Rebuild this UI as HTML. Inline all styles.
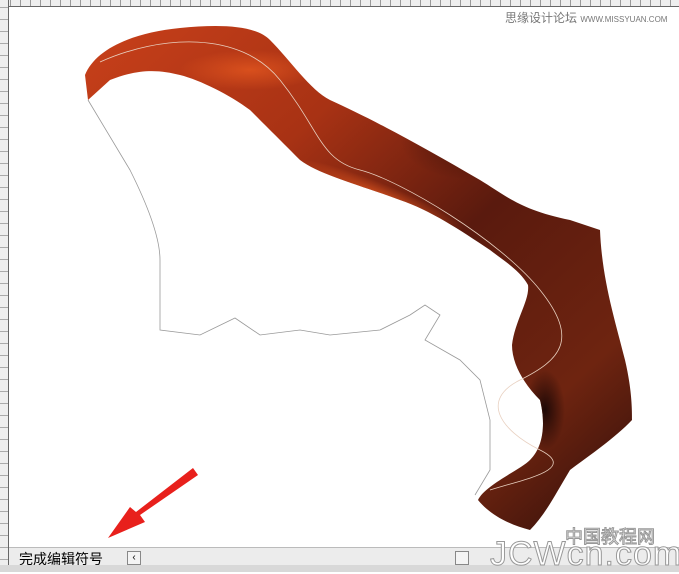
<!DOCTYPE html>
<html><head><meta charset="utf-8"><style>
body{margin:0;width:679px;height:572px;overflow:hidden;background:#fff;font-family:"Liberation Sans","Noto Sans CJK SC",sans-serif;position:relative}
.rt{position:absolute;left:0;top:0;width:679px;height:6px;background:#eee;border-bottom:1px solid #666;background-image:repeating-linear-gradient(90deg,#999 0 1px,transparent 1px 10px)}
.rl{position:absolute;left:0;top:0;width:8px;height:572px;background:#eee;border-right:1px solid #666;background-image:repeating-linear-gradient(0deg,#aaa 0 1px,transparent 1px 12px)}
.bar{position:absolute;left:9px;top:547px;width:670px;height:18px;background:#ececec;border-top:1px solid #bbb}
.bot{position:absolute;left:0;top:565px;width:679px;height:7px;background:#d8d8d8}
</style></head><body>
<svg width="679" height="572" style="position:absolute;left:0;top:0">
<defs><linearGradient id="g" x1="0" y1="0" x2="1" y2="1">
<stop offset="0" stop-color="#c8401a"/><stop offset=".3" stop-color="#a83214"/><stop offset=".55" stop-color="#5a1a0e"/><stop offset=".8" stop-color="#6e2410"/><stop offset="1" stop-color="#2e0e0a"/></linearGradient>
<radialGradient id="h" cx="0.5" cy="0.5" r="0.5"><stop offset="0" stop-color="#e85a20" stop-opacity=".7"/><stop offset="1" stop-color="#e85a20" stop-opacity="0"/></radialGradient>
<radialGradient id="d" cx="0.5" cy="0.5" r="0.5"><stop offset="0" stop-color="#150505" stop-opacity=".9"/><stop offset="1" stop-color="#150505" stop-opacity="0"/></radialGradient>
<clipPath id="c"><path id="rp" d="M85,75 C95,50 130,33 180,28 C220,24 255,25 270,40 C290,60 310,90 330,100 C370,118 420,145 480,180 C505,195 520,210 570,220 L600,230 C602,280 615,320 625,360 C632,390 632,410 632,420 C615,438 590,455 570,470 C555,495 545,515 530,530 C510,525 490,515 478,500 C485,485 520,470 530,460 C545,445 545,420 540,400 C525,385 512,365 512,345 C515,320 530,300 528,285 C520,270 500,258 490,250 C460,230 430,210 400,200 C360,185 320,175 300,160 C285,145 270,130 250,110 C230,95 200,80 180,75 C160,70 140,68 110,80 L88,100 Z"/></clipPath></defs>
<use href="#rp" fill="url(#g)"/>
<g clip-path="url(#c)">
<ellipse cx="380" cy="195" rx="90" ry="12" fill="url(#h)" transform="rotate(22 380 195)"/>
<ellipse cx="250" cy="70" rx="70" ry="20" fill="url(#h)"/>
<ellipse cx="470" cy="140" rx="70" ry="40" fill="url(#d)" opacity=".5"/>
<ellipse cx="545" cy="410" rx="20" ry="40" fill="url(#d)"/>
<ellipse cx="500" cy="390" rx="18" ry="25" fill="url(#h)"/>
</g>
<path d="M100,62 C160,35 240,30 280,80 S320,160 360,170 S500,240 540,290 S560,360 520,380 S500,430 540,450 S520,480 490,490" fill="none" stroke="#e8d0c0" stroke-width="0.8"/>
<path d="M88,100 L130,170 C150,210 160,240 160,260 L160,330 200,335 235,318 260,335 300,330 330,335 380,330 410,315 425,305 440,315 425,340 460,360 480,380 490,420 490,470 475,495" fill="none" stroke="#999" stroke-width="0.8"/>
<path d="M198,475 L140,515 145,522 108,538 130,507 136,512 193,468 Z" fill="#e8201c"/>
</svg>
<div class="rt"></div><div class="rl"></div>
<div style="position:absolute;left:505px;top:9px;font-size:12px;color:#777">思缘设计论坛 <span style="font-size:8px">WWW.MISSYUAN.COM</span></div>
<div class="bar"><span style="position:absolute;left:10px;top:1px;font-size:14px;color:#000">完成编辑符号</span>
<div style="position:absolute;left:118px;top:3px;width:12px;height:12px;border:1px solid #888;background:#f4f4f4;font-size:10px;line-height:12px;text-align:center">‹</div>
<div style="position:absolute;left:446px;top:3px;width:12px;height:12px;border:1px solid #888;background:#f4f4f4"></div></div>
<div class="bot"></div>
<div style="position:absolute;left:490px;top:535px;font-size:34px;color:#fff;-webkit-text-stroke:1px #999;letter-spacing:1px">JCWcn.com</div>
<div style="position:absolute;left:565px;top:523px;font-size:18px;color:#fff;-webkit-text-stroke:1px #999">中国教程网</div>
</body></html>
